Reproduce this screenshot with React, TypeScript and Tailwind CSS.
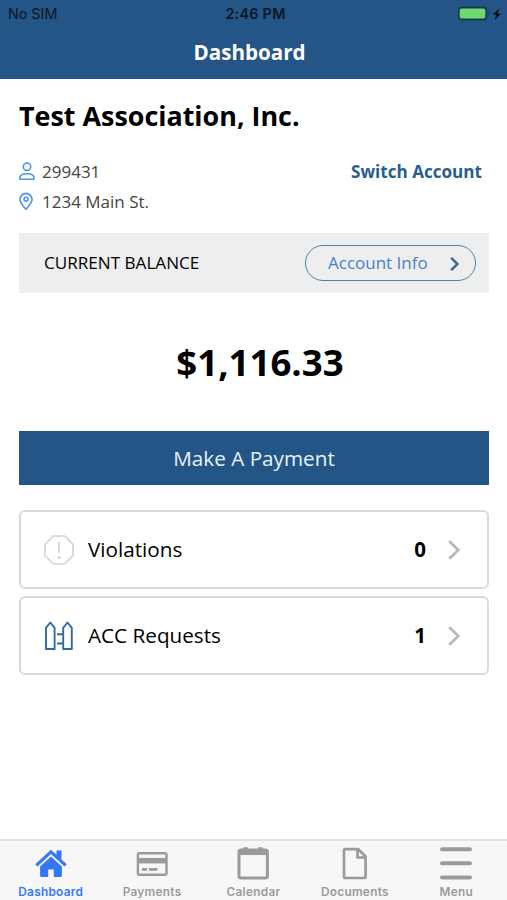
import React, { useState } from "react";

type IconProps = { className?: string };

const tabs = [
  { id: "dashboard", label: "Dashboard", Icon: HomeIcon },
  { id: "payments", label: "Payments", Icon: CardIcon },
  { id: "calendar", label: "Calendar", Icon: CalendarIcon },
  { id: "documents", label: "Documents", Icon: DocumentIcon },
  { id: "menu", label: "Menu", Icon: MenuIcon },
];

const items = [
  { label: "Violations", count: 0, Icon: ViolationIcon },
  { label: "ACC Requests", count: 1, Icon: FenceIcon },
];

function UserIcon() {
  return (
    <svg width="16" height="20" viewBox="0 0 16 20" fill="none" stroke="#4f93ee" strokeWidth="1.6">
      <circle cx="8" cy="4.700" r="3.700" />
      <path d="M1 17.200v-1.200c0-2.600 3-4.200 7-4.200s7 1.600 7 4.200v1.200z" strokeLinejoin="round" />
    </svg>
  );
}

function PinIcon() {
  return (
    <svg width="14" height="20" viewBox="0 0 14 20" fill="none" stroke="#4f93ee" strokeWidth="1.6">
      <path d="M7 17.400C5 14.600 1 11 1 7.400a6 6 0 0 1 12 0c0 3.600-4 7.200-6 10z" strokeLinejoin="round" />
      <circle cx="7" cy="7.200" r="1.900" />
    </svg>
  );
}

function ViolationIcon() {
  return (
    <svg width="30" height="30" viewBox="0 0 30 30" fill="none" stroke="#d4d4d4" strokeWidth="1.700">
      <path d="M9.300 1h11.400L29 9.300v11.400L20.700 29H9.300L1 20.700V9.300z" strokeLinejoin="round" />
      <path d="M15 6.500v11.500" />
      <circle cx="15" cy="22.500" r="1.600" fill="#d4d4d4" stroke="none" />
    </svg>
  );
}

function FenceIcon() {
  return (
    <svg width="30" height="30" viewBox="0 0 30 30" fill="none" stroke="#2d6a9f" strokeWidth="1.900" strokeLinejoin="round">
      <path d="M2 28V6.800L6.300 1.500l4.300 5.300V28z" />
      <path d="M19.200 28V6.800l4.300-5.300 4.300 5.300V28z" />
      <path d="M13 13.300h6M13 22.500h6" />
    </svg>
  );
}

function Chevron({ className }: IconProps) {
  return (
    <svg className={className} viewBox="0 0 12 20" fill="none" stroke="currentColor">
      <path d="M1.200 1.200L10.300 10l-9.100 8.800" />
    </svg>
  );
}

function HomeIcon() {
  return (
    <svg width="34" height="36" viewBox="0 0 34 36" fill="currentColor">
      <path d="M17 3.700l5.500 5.100V4.500h5v8.900l5.300 4.900-2.200 2.300L17 8 3.400 20.600 1.200 18.300z" />
      <path d="M17 10.500l10.900 10.100v8.900a1.500 1.500 0 0 1-1.500 1.500h-6.600v-7.500h-5.600v7.500H7.600a1.500 1.500 0 0 1-1.500-1.500v-8.900z" />
    </svg>
  );
}

function CardIcon() {
  return (
    <svg width="32" height="36" viewBox="0 0 32 36" fill="none" stroke="currentColor">
      <rect x="1.900" y="7.200" width="28.600" height="21.500" rx="1.500" strokeWidth="2.400" />
      <path d="M2 14.700h28" strokeWidth="5.500" />
      <path d="M6 23.400h5M12.800 23.400h8.700" strokeWidth="2.600" />
    </svg>
  );
}

function CalendarIcon() {
  return (
    <svg width="34" height="36" viewBox="0 0 34 36" fill="none" stroke="currentColor">
      <rect x="3" y="4" width="28.400" height="28" rx="2" strokeWidth="3" />
      <path d="M3 6.300h28" strokeWidth="5.500" />
      <path d="M7.500 1.800h4v2h-4zM22.500 1.800h4v2h-4z" fill="currentColor" strokeWidth="1" />
    </svg>
  );
}

function DocumentIcon() {
  return (
    <svg width="26" height="36" viewBox="0 0 26 36" fill="none" stroke="currentColor" strokeWidth="2.700" strokeLinejoin="round">
      <path d="M16.300 3.200H3.500a1.500 1.500 0 0 0-1.500 1.500v25.800a1.500 1.500 0 0 0 1.500 1.500h18.600a1.500 1.500 0 0 0 1.500-1.500V10.500z" />
      <path d="M15.500 3.500v8h8" />
    </svg>
  );
}

function MenuIcon() {
  return (
    <svg width="34" height="36" viewBox="0 0 34 36" fill="none" stroke="currentColor" strokeWidth="4" strokeLinecap="round">
      <path d="M3 3.300h28M3 17.300h28M3 31.500h28" />
    </svg>
  );
}

function StatusBar() {
  return (
    <div className="grid h-7 grid-cols-3 items-center pr-1 pl-2 font-['Inter','Liberation_Sans',sans-serif] text-[14.3px] leading-none text-[#0b1522]">
      <span>No SIM</span>
      <span className="text-center font-semibold tracking-[0.3px]">2:46 PM</span>
      <span className="flex items-center justify-end">
        <svg width="46" height="16" viewBox="0 0 46 16">
          <rect x="1.800" y="1.500" width="27.500" height="12" rx="3" fill="#6fd96f" stroke="#143c50" strokeWidth="1.800" />
          <path d="M31.500 5.500c1.500.5 1.500 3.500 0 4z" fill="#143c50" />
          <path d="M42 2.500l-6.200 6.300h3.400l-1.400 5.200 6.300-6.600h-3.500z" fill="#07101a" />
        </svg>
      </span>
    </div>
  );
}

export default function App() {
  const [active, setActive] = useState("dashboard");

  return (
    <div className="flex h-[900px] w-full flex-col bg-white font-['Open_Sans','Noto_Sans',sans-serif] text-black">
      {/* Header */}
      <header className="h-[79px] shrink-0 bg-[#235587]">
        <StatusBar />
        <h1 className="pt-2.5 pr-2 text-center text-[20.6px] leading-7 font-bold text-white">Dashboard</h1>
      </header>

      <main className="flex-1 pr-[18px] pl-[19px]">
        <h2 className="pt-[19px] text-[26.9px] leading-9 font-bold">Test Association, Inc.</h2>

        <div className="mt-[23px] flex items-start justify-between pr-[7px]">
          <div className="text-[17px] leading-[30px] text-[#444]">
            <div className="flex items-center">
              <span className="flex w-[23px]"><UserIcon /></span>
              299431
            </div>
            <div className="flex items-center">
              <span className="flex w-[23px]"><PinIcon /></span>
              1234 Main St.
            </div>
          </div>
          <button className="text-[17.1px] leading-[30px] font-bold text-[#27608f]">Switch Account</button>
        </div>

        {/* Balance */}
        <div className="mt-4 flex h-[60px] items-center justify-between bg-[#eee] pr-[13px] pl-[25px]">
          <span className="text-[17.1px]">CURRENT BALANCE</span>
          <button className="flex h-9 w-[171px] items-center justify-between rounded-full border-[1.5px] border-[#4b82ac] pr-4 pl-[22px] text-[17px] text-[#4a80d0]">
            Account Info
            <Chevron className="mt-0.5 h-[14px] w-[9px] stroke-[3.5] text-[#3a6c98]" />
          </button>
        </div>
        <div className="flex h-[138px] items-center justify-center pl-3 text-[36.6px] font-bold">$1,116.33</div>
        <button className="h-[54px] w-full bg-[#235587] pt-0.5 text-[20.7px] text-[#e8f2fc]">Make A Payment</button>

        <div className="mt-[25px] space-y-[7px]">
          {items.map(({ label, count, Icon }) => (
            <div key={label} className="flex h-[79px] items-center rounded-md border-2 border-[#dadada] pr-[27px] pl-[23px]">
              <Icon />
              <span className="ml-3.5 flex-1 text-[20.7px]">{label}</span>
              <span className="text-[20.5px] font-bold">{count}</span>
              <Chevron className="ml-[22px] h-5 w-3 stroke-[2.8] text-[#b9b9b9]" />
            </div>
          ))}
        </div>
      </main>

      <nav className="grid h-[61px] shrink-0 grid-cols-5 border-t-2 border-[#e2e2e2] bg-[#f7f7f7] font-['Inter','Liberation_Sans',sans-serif]">
        {tabs.map(({ id, label, Icon }) => (
          <button
            key={id}
            onClick={() => setActive(id)}
            className={`flex flex-col items-center pt-[5px] text-[11.8px] leading-4 font-semibold tracking-[0.3px] ${active === id ? "text-[#3478f6]" : "text-[#9b9b9b]"}`}
          >
            <Icon />
            <span className="mt-0.5">{label}</span>
          </button>
        ))}
      </nav>
    </div>
  );
}
